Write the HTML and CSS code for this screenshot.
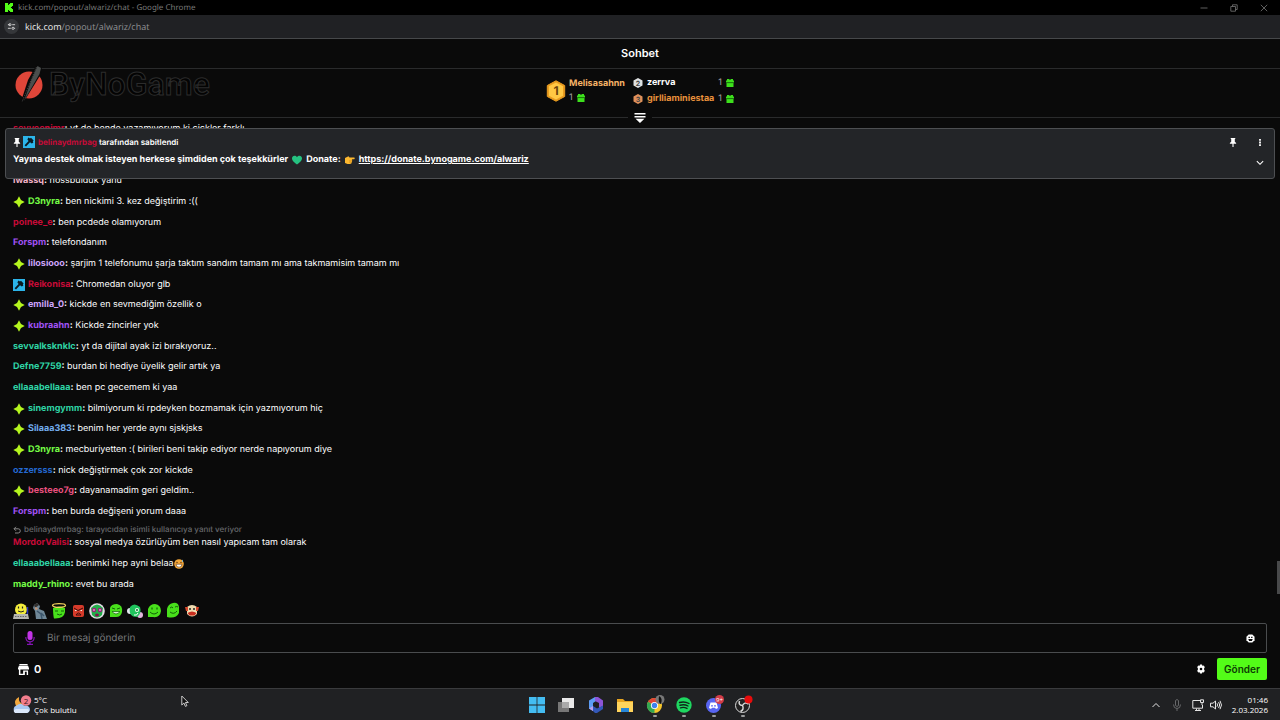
FILE: index.html
```html
<!DOCTYPE html>
<html lang="tr">

<head>
    <meta charset="UTF-8">
    <meta name="viewport" content="width=device-width, initial-scale=1.0">
    <title>kick.com/popout/alwariz/chat</title>
    <link rel="stylesheet" href="styles.css">
</head>

<body>
    <!-- shared icons -->
    <svg class="defs" aria-hidden="true">
        <symbol id="star" viewBox="0 0 12 12">
            <path d="M6 .3 8 4 11.700 6 8 8 6 11.700 4 8 .3 6 4 4z" fill="#b4f51e" />
        </symbol>
        <symbol id="mod" viewBox="0 0 12 12">
            <path d="M0 0h12v12H0z" fill="#2cb5ea" />
            <path d="M5.4 1.6 7 2.4 8 1.8 10.6 4.6 9.8 5.4 10.4 6.4 8.8 7.6 7 6.2 3 10.6 1.6 9.2 5.6 5 4.4 3.4z" fill="#0a1a22" />
        </symbol>
        <symbol id="gift" viewBox="0 0 8 8">
            <path d="M1 0h2l1 1 1-1h2v1.500h1v2H0v-2h1zM.5 4h7v4h-7z" fill="#3de01c" />
            <path d="M.5 3.700h7" stroke="#158a0a" stroke-width=".6" />
        </symbol>
        <symbol id="pin" viewBox="0 0 8 10">
            <path d="M1.500 0h5v1.200H6v3l1.500 1.300v1H4.600V10H3.400V6.500H.5v-1L2 4.200v-3h-.5z" fill="#fff" />
        </symbol>
    </svg>

    <div class="title-bar">
        <svg class="kick-logo" viewBox="0 0 9 10">
            <path d="M0 0h3.500v2.300h1V1.200h1.200V0H9v3.400H7.800v1.100H6.700v1h1.100v1.100H9V10H5.700V8.800H4.500V7.700h-1V10H0z" fill="#53fc18" />
        </svg>
        <span class="window-title">kick.com/popout/alwariz/chat - Google Chrome</span>
        <div class="window-controls">
            <button aria-label="Simge durumuna küçült"><svg viewBox="0 0 8 8"><path d="M.5 4h7" /></svg></button>
            <button aria-label="Önceki boyut"><svg viewBox="0 0 8 8"><path d="M.8 2.500h4.700v4.700H.8zM2.500 2.300V.8h4.700v4.700H5.700" /></svg></button>
            <button aria-label="Kapat"><svg viewBox="0 0 8 8"><path d="M.8.800l6.400 6.400M7.200.800.800 7.200" /></svg></button>
        </div>
    </div>

    <div class="address-bar">
        <button class="site-info" aria-label="Site bilgileri">
            <svg viewBox="0 0 10 10">
                <path d="M1 3h2M5.800 3H9M1 7h3.200M8 7h1" />
                <circle cx="3.300" cy="3" r="1.200" />
                <circle cx="6.700" cy="7" r="1.200" />
            </svg>
        </button>
        <span class="url"><b>kick.com</b>/popout/alwariz/chat</span>
    </div>

    <header class="chat-header">
        <h1>Sohbet</h1>
    </header>

    <section class="leaderboard">
        <div class="sponsor">
            <svg viewBox="0 0 30 42">
                <circle cx="14" cy="22" r="13.500" fill="#df4639" />
                <path d="M22 1 27 3.500 26 11 8 40 5.500 40 13 17z" fill="#0a0a0a" />
                <path d="M22.500 3 26 5 24.500 11 9 38 16 18z" fill="#4b4e4d" />
                <path d="M21.500 4 7 39" stroke="#555" stroke-width=".7" stroke-dasharray="1.500 1" />
            </svg>
            <span>ByNoGame</span>
        </div>
        <div class="ranks">
            <div class="first">
                <svg class="medal-big" viewBox="0 0 20 22">
                    <path d="M10 .8 18.700 5.500v11L10 21.200 1.300 16.500v-11z" fill="#e99c20" stroke="#e99c20" stroke-linejoin="round" />
                    <path d="M10 2.500 17 6.300v9.400L10 19.500 3 15.700V6.300z" fill="#ffc844" />
                    <text x="10" y="15" text-anchor="middle">1</text>
                </svg>
                <div>
                    <div class="gold">Melisasahnn</div>
                    <div class="gifts">1 <svg><use href="#gift" /></svg></div>
                </div>
            </div>
            <div class="others">
                <div class="rank">
                    <svg class="medal" viewBox="0 0 10 10">
                        <path d="M5 0 9.500 2.500v5L5 10 .5 7.500v-5z" fill="#dfe1e3" />
                        <text x="5" y="7.500" text-anchor="middle">2</text>
                    </svg>
                    <span class="name">zerrva</span>
                    <span class="gifts">1 <svg><use href="#gift" /></svg></span>
                </div>
                <div class="rank">
                    <svg class="medal" viewBox="0 0 10 10">
                        <path d="M5 0 9.500 2.500v5L5 10 .5 7.500v-5z" fill="#e0905a" />
                        <text x="5" y="7.500" text-anchor="middle">3</text>
                    </svg>
                    <span class="name bronze">girlliaminiestaa</span>
                    <span class="gifts">1 <svg><use href="#gift" /></svg></span>
                </div>
            </div>
        </div>
        <button class="collapse" aria-label="Sıralamayı daralt">
            <svg viewBox="0 0 12 10"><path d="M.5 0h11v1.600H.5zM.5 3h11v1.600H.5zM1.600 5.800h8.800L6 10z" fill="#fff" /></svg>
        </button>
    </section>

    <main class="chat">
        <div class="pinned">
            <div class="pinned-text">
                <p class="pinned-by">
                    <svg class="pin"><use href="#pin" /></svg>
                    <svg class="badge"><use href="#mod" /></svg>
                    <span><b class="red">belinaydmrbag</b> tarafından sabitlendi</span>
                </p>
                <p class="pinned-message">Yayına destek olmak isteyen herkese şimdiden çok teşekkürler
                    <svg viewBox="0 0 10 10"><path d="M5 9.500C1 6.500 0 5 0 3.200 0 .5 3.600-.2 5 2.200 6.400-.2 10 .5 10 3.200 10 5 9 6.500 5 9.500z" fill="#25c281" /></svg>
                    Donate:
                    <svg viewBox="0 0 10 10"><path d="M0 3 3.500 1.200 4.500 2.500H9.300q1 .8 0 1.700H6.800Q7.800 5 7 5.800 7.400 6.600 6.700 7.200 6.900 8.800 5 9H2.500L0 8z" fill="#fcb830" /><path d="M4 5.800h3M4 7.200h2.700" stroke="#c67f12" stroke-width=".5" /></svg>
                    <a href="https://donate.bynogame.com/alwariz">https://donate.bynogame.com/alwariz</a>
                </p>
            </div>
            <div class="pinned-actions">
                <button aria-label="Sabitlemeyi kaldır"><svg class="pin"><use href="#pin" /></svg></button>
                <button aria-label="Menü"><svg class="pin" viewBox="0 0 8 10"><path d="M3 1h2v2H3zM3 4h2v2H3zM3 7h2v2H3z" fill="#fff" /></svg></button>
                <button class="expand" aria-label="Genişlet"><svg class="pin" viewBox="0 0 8 10"><path d="M.5 3.500 4 7 7.500 3.500" fill="none" stroke="#fff" stroke-width="1.200" /></svg></button>
            </div>
        </div>

        <ul class="messages">
            <li><p><b class="red">sevvcenimr</b><b>:</b> yt de bende yazamıyorum ki ciçkler farklı</p></li>
            <li class="covered"></li>
            <li><p><b class="pink">iwassq</b><b>:</b> hossbulduk yahu</p></li>
            <li><svg class="badge"><use href="#star" /></svg><p><b class="green">D3nyra</b><b>:</b> ben nickimi 3. kez değiştirim :((</p></li>
            <li><p><b class="red">poinee_e</b><b>:</b> ben pcdede olamıyorum</p></li>
            <li><p><b class="purple">Forspm</b><b>:</b> telefondanım</p></li>
            <li><svg class="badge"><use href="#star" /></svg><p><b class="lilac">lilosiooo</b><b>:</b> şarjim 1 telefonumu şarja taktım sandım tamam mı ama takmamisim tamam mı</p></li>
            <li><svg class="badge"><use href="#mod" /></svg><p><b class="red">Reikonisa</b><b>:</b> Chromedan oluyor glb</p></li>
            <li><svg class="badge"><use href="#star" /></svg><p><b class="lilac">emilla_0</b><b>:</b> kickde en sevmediğim özellik o</p></li>
            <li><svg class="badge"><use href="#star" /></svg><p><b class="purple">kubraahn</b><b>:</b> Kickde zincirler yok</p></li>
            <li><p><b class="teal">sevvalksknklc</b><b>:</b> yt da dijital ayak izi bırakıyoruz..</p></li>
            <li><p><b class="teal">Defne7759</b><b>:</b> burdan bi hediye üyelik gelir artık ya</p></li>
            <li><p><b class="teal">ellaaabellaaa</b><b>:</b> ben pc gecemem ki yaa</p></li>
            <li><svg class="badge"><use href="#star" /></svg><p><b class="teal">sinemgymm</b><b>:</b> bilmiyorum ki rpdeyken bozmamak için yazmıyorum hiç</p></li>
            <li><svg class="badge"><use href="#star" /></svg><p><b class="sky">Silaaa383</b><b>:</b> benim her yerde aynı sjskjsks</p></li>
            <li><svg class="badge"><use href="#star" /></svg><p><b class="green">D3nyra</b><b>:</b> mecburiyetten :( birileri beni takip ediyor nerde napıyorum diye</p></li>
            <li><p><b class="blue">ozzersss</b><b>:</b> nick değiştirmek çok zor kickde</p></li>
            <li><svg class="badge"><use href="#star" /></svg><p><b class="rose">besteeo7g</b><b>:</b> dayanamadim geri geldim..</p></li>
            <li><p><b class="purple">Forspm</b><b>:</b> ben burda değişeni yorum daaa</p></li>
            <li class="reply">
                <div class="reply-to">
                    <svg viewBox="0 0 8 8"><path d="M3 .8 1 2.800l2 2M1 2.800h4.200a1.800 1.800 0 0 1 0 4.200H2" /></svg>
                    <span>belinaydmrbag: tarayıcıdan isimli kullanıcıya yanıt veriyor</span>
                </div>
                <p><b class="red">MordorValisi</b><b>:</b> sosyal medya özürlüyüm ben nasıl yapıcam tam olarak</p>
            </li>
            <li>
                <p><b class="teal">ellaaabellaaa</b><b>:</b> benimki hep ayni belaa</p>
                <svg class="emoji" viewBox="0 0 10 10">
                    <circle cx="5" cy="5" r="4.800" fill="#f5a93a" />
                    <path d="M2 5.200h6a3 3 0 0 1-6 0z" fill="#fff" stroke="#5d3412" stroke-width=".6" />
                    <path d="M1.800 3.800 3 3l1 .8M6 3.800 7 3l1.200.8" fill="none" stroke="#5d3412" stroke-width=".7" />
                    <path d="M8.200.5q1.600 2 .4 2.400T8.200.5z" fill="#6fc4ef" />
                </svg>
            </li>
            <li><p><b class="green">maddy_rhino</b><b>:</b> evet bu arada</p></li>
        </ul>
        <div class="scroll-thumb"></div>
    </main>

    <footer class="composer">
        <div class="emotes">
            <button aria-label="Klavye"><svg viewBox="0 0 16 16"><circle cx="8" cy="6.500" r="6" fill="#f3ec3c" /><path d="M5.500 3.500v2M9.500 3.500v2" stroke="#222" stroke-width="1.200" /><path d="M5 8q3 2 6 0" fill="none" stroke="#222" /><path d="M14.500 4v7" stroke="#2632b8" stroke-width="1.500" /><path d="M1 11h14l1 5H0z" fill="#b5b5b0" /><path d="M2 13.500h12" stroke="#666" stroke-dasharray="1.500 1" /></svg></button>
            <button aria-label="Üzgün"><svg viewBox="0 0 16 16"><path d="M2 2 5 0l3 3-1 3 5 2 3 8H4L3 8 1 5z" fill="#6f8797" /><path d="M2 2 5 0l2 2-4 3z" fill="#33302e" /><path d="M3 4l3 1-1 2-2-.5z" fill="#bd9378" /><path d="M5 8l4 3 1 5M9 10l3 3" fill="none" stroke="#3c566c" stroke-width="1.500" /></svg></button>
            <button aria-label="Melek"><svg viewBox="0 0 16 16"><path d="M2 5q6-3 12 0v4q-1 7-11 6.500Q2 12 2 5z" fill="#48e01b" /><ellipse cx="8" cy="2.500" rx="6.500" ry="1.800" fill="none" stroke="#f2d15c" stroke-width="1.300" /><path d="M4 8h3M10 8h3M6 11q3 2 5 0" fill="none" stroke="#116009" /></svg></button>
            <button aria-label="Kızgın"><svg viewBox="0 0 16 16"><rect x="3" y="2" width="11" height="12" rx="2" fill="#d63b2b" /><path d="M4 5l4 2.500L13 5M6 12q2.500-4 5 0z" fill="none" stroke="#3a0b08" /><path d="M5 7.500h1.500M10.500 7.500h1.500" stroke="#f4e8dc" /></svg></button>
            <button aria-label="Kulaklık"><svg viewBox="0 0 16 16"><circle cx="8" cy="8" r="7.800" fill="#e5dce6" /><path d="M2 5q6-7 12 0l-1 7q-5 5-10 0z" fill="#22ad49" /><circle cx="5" cy="7" r="2.200" fill="#9a1e78" /><circle cx="11" cy="7" r="2.200" fill="#9a1e78" /><circle cx="5" cy="7" r=".8" fill="#fff" /><circle cx="11" cy="7" r=".8" fill="#fff" /><ellipse cx="8" cy="12" rx="2" ry="1.500" fill="#7c144d" /></svg></button>
            <button aria-label="Gülen"><svg viewBox="0 0 16 16"><path d="M2 5q1-4 7-4 6 1 5 8-1 5-6 5H2z" fill="#48e01b" /><path d="M4 5l3 1M9 6l3-1" stroke="#116009" /><path d="M4 8.500h8q-2 2.500-4 2.500T4 8.500z" fill="#d7f7ce" stroke="#116009" stroke-width=".7" /></svg></button>
            <button aria-label="Dans"><svg viewBox="0 0 16 16"><circle cx="3" cy="8" r="3" fill="#e5e5ee" /><circle cx="13" cy="12" r="3" fill="#e4b5df" /><path d="M3 4q4-5 10 0 2 6-3 10-9 0-7-10z" fill="#20c45d" /><circle cx="10" cy="7" r="2" fill="#eafbed" /><circle cx="10" cy="7" r="1" fill="#126d35" /><path d="M7 12q3 1 4-2" fill="none" stroke="#fff" /></svg></button>
            <button aria-label="Mutlu"><svg viewBox="0 0 16 16"><path d="M2 6q2-5 7-5 6 1 6 7-1 7-8 6H2z" fill="#48e01b" /><path d="M6 4.500v2M11 4.500v2" stroke="#116009" stroke-width="1.200" /><path d="M4 9q4 4 8 0" fill="none" stroke="#116009" /></svg></button>
            <button aria-label="Düşünceli"><svg viewBox="0 0 16 16"><path d="M2 6q1-5 6-6 5-1 6 4v6q-3 6-12 4z" fill="#48e01b" /><path d="M5 5q2-2 3 0M10 4q2-1 3 0M5 9q4 3 7-1" fill="none" stroke="#116009" /></svg></button>
            <button aria-label="Palyaço"><svg viewBox="0 0 16 16"><path d="M3 4q5-4 10 0v7q-5 5-10 0z" fill="#f0dcb0" /><path d="M1 4h3v4H2zM15 4h-3v4h2z" fill="#d8462b" /><path d="M3.500 10q4.500-3 9 0l-2 2.500h-5z" fill="#c82c1e" /><path d="M5 6h2M9 6h2" stroke="#222" stroke-width="1.500" /></svg></button>
        </div>
        <div class="message-box">
            <button class="mic" aria-label="Sesli mesaj"><svg viewBox="0 0 10 14"><rect x="2.500" width="5" height="9" rx="2.500" fill="#c334e8" /><path d="M.8 6q0 4.800 4.200 4.800T9.200 6M5 11v2.500M2 13.400h6" fill="none" stroke="#8414b4" stroke-width="1.200" /></svg></button>
            <input type="text" placeholder="Bir mesaj gönderin" aria-label="Bir mesaj gönderin">
            <button class="smile" aria-label="İfadeler"><svg viewBox="0 0 10 10"><path d="M3 .5h4L9.500 3v4L7 9.500H3L.5 7V3z" fill="#fff" /><path d="M2.800 3h1.500v1.500H2.800zM5.700 3h1.500v1.500H5.700zM2.500 5.600h5L6.500 7.800h-3z" fill="#0a0a0a" /></svg></button>
        </div>
        <div class="composer-actions">
            <button class="points"><svg viewBox="0 0 12 12"><path d="M1.500 0h9v1.300h-9zM1 2h10l1 2.500v1.500H0V4.500zM1 6h1.600v4.500h3V7H11v5H9.500V8.400H7.500V12H1z" fill="#fff" /></svg>0</button>
            <button class="settings" aria-label="Ayarlar"><svg viewBox="0 0 10 10"><path d="M4 .5h2l.3 1.300 1.300-.4 1.200 1.700-.9 1.900.9 1.900-1.200 1.700-1.300-.4L6 9.500H4l-.3-1.300-1.300.4-1.200-1.700.9-1.900-.9-1.900 1.200-1.700 1.300.4z" fill="#fff" /><circle cx="5" cy="5" r="1.300" fill="#0a0a0a" /></svg></button>
            <button class="send">Gönder</button>
        </div>
    </footer>

    <div class="taskbar">
        <button class="weather">
            <svg viewBox="0 0 20 20">
                <path d="M7 2q-1 6 5 7-3 5-8 2-3-6 3-9z" fill="#f4a83c" />
                <path d="M4 18a4 4 0 0 1 .5-7.500Q9 7 12 10.500 18 10 18 15q-1 3-3 3z" fill="#a9c8f2" />
                <path d="M3 18q-3-3 1-4h12q3 2-1 4z" fill="#dbe8fa" />
                <circle cx="14" cy="5.500" r="5.200" fill="#f27e8d" />
                <text x="14" y="8.500" text-anchor="middle">2</text>
            </svg>
            <span>5°C<br>Çok bulutlu</span>
        </button>
        <div class="apps">
            <button aria-label="Başlat"><svg viewBox="0 0 16 16"><path d="M0 0h7.600v7.600H0zM8.400 0H16v7.600H8.400zM0 8.400h7.600V16H0zM8.400 8.400H16V16H8.400z" fill="#44bdf2" /></svg></button>
            <button aria-label="Görev görünümü"><svg viewBox="0 0 16 16"><path d="M4 1h12v10H4z" fill="#e9e9e9" /><path d="M0 5h11v10H0z" fill="#777" /><path d="M4 5h7v6H4z" fill="#aaa" /></svg></button>
            <button aria-label="Microsoft 365"><svg viewBox="0 0 16 16"><path d="M7 0 1 3.500v8L5 14V6l6-4z" fill="#5c9cf5" /><path d="M7 0h3l5 3.500V9l-4 2V6L7 4z" fill="#8d55d8" /><path d="M5 14V9l4 2.500 6-3V12l-6 4H7z" fill="#3358b8" /><path d="M1 11.500 5 9v5z" fill="#b9a1f0" /></svg></button>
            <button aria-label="Dosya Gezgini"><svg viewBox="0 0 16 16"><path d="M0 2h6l2 2h8v11H0z" fill="#e8a521" /><path d="M0 5h16v10H0z" fill="#ffd45c" /><path d="M4 11h8v4H4z" fill="#2686d8" /></svg></button>
            <button class="running" aria-label="Google Chrome"><svg viewBox="0 0 16 16"><circle cx="7.500" cy="8.500" r="7.500" fill="#f6c62c" /><path d="M7.500 8.500 1 4.700A7.500 7.500 0 0 1 14 4.700z" fill="#e24535" /><path d="M1 4.700 7.500 8.500 7.500 16A7.500 7.500 0 0 1 1 4.700z" fill="#34a853" /><circle cx="7.500" cy="8.500" r="3.600" fill="#fff" /><circle cx="7.500" cy="8.500" r="2.700" fill="#3f82ef" /><circle cx="13" cy="2.500" r="4.500" fill="#777" /><path d="M12-1q4 2 2 8-3-1-2-8z" fill="#111" /></svg></button>
            <button class="running" aria-label="Spotify"><svg viewBox="0 0 16 16"><circle cx="8" cy="8" r="7.700" fill="#1ed760" /><path d="M3.500 5.500q5-1.500 9.500 1M4 8.200q4.500-1.200 8 .8M4.500 10.800q3.500-1 6.500.6" fill="none" stroke="#10251a" stroke-width="1.400" stroke-linecap="round" /></svg></button>
            <button class="running" aria-label="Discord"><svg viewBox="0 0 16 16"><circle cx="7.500" cy="8.500" r="7.500" fill="#5865f2" /><path d="M4.500 5.500h6l1.500 5.500-2 1-1-1.200H6L5 12l-2-1z" fill="#fff" /><circle cx="6" cy="8.800" r=".9" fill="#5865f2" /><circle cx="9" cy="8.800" r=".9" fill="#5865f2" /><circle cx="13.500" cy="2.500" r="4.500" fill="#d33c48" /><text x="13.500" y="4.500" text-anchor="middle">9+</text></svg></button>
            <button class="running" aria-label="OBS Studio"><svg viewBox="0 0 16 16"><circle cx="7.500" cy="8.500" r="7" fill="#222" stroke="#d7d7d7" /><path d="M7.500 8.500Q3 8 4.500 4M7.500 8.500q2-4 6-1.500M7.500 8.500q2 4-2 6" fill="none" stroke="#d7d7d7" stroke-width="1.500" /><circle cx="13.500" cy="2.500" r="4" fill="#e80c0c" /></svg></button>
        </div>
        <div class="tray">
            <button aria-label="Gizli simgeler"><svg viewBox="0 0 12 12"><path d="M2.500 8 6 4.500 9.500 8" /></svg></button>
            <button class="muted" aria-label="Mikrofon"><svg viewBox="0 0 12 12"><path d="M4.500 1.500q1.500-2 3 0v5q-1.500 2-3 0zM2.500 5.500q0 4 3.500 4t3.500-4M6 9.500V12" /></svg></button>
            <button aria-label="Ağ"><svg viewBox="0 0 12 12"><path d="M8 1.500H.8v7.700h9.700V6M3 11.500h6M4.500 9.500v2M7 9.500v2M8.500.800h3v2.700h-3zM10 3.500V6" /></svg></button>
            <button aria-label="Ses"><svg viewBox="0 0 12 12"><path d="M.5 4.200H3L5.500 2v8L3 7.800H.5zM7 4.300q1.200 1.700 0 3.400M8.600 3q2.200 3 0 6M10 1.800q3 4.200 0 8.400" /></svg></button>
            <button class="clock">01:46<br>2.03.2026</button>
        </div>
        <svg class="cursor" viewBox="0 0 8 12"><path d="M.8 1v9l2.100-2 1.500 3.400 1.500-.7-1.500-3.200h2.900z" fill="#111" stroke="#ddd" stroke-width=".9" /></svg>
    </div>
</body>

</html>
```
FILE: styles.css
```css
* {
    margin: 0;
    padding: 0;
    box-sizing: border-box;
}

body {
    display: flex;
    flex-direction: column;
    height: 100vh;
    overflow: hidden;
    background: #0a0a0a;
    color: #fff;
    font-family: Inter, "Liberation Sans", sans-serif;
    font-size: 9px;
    line-height: 16px;
    text-rendering: geometricPrecision;
}

button {
    display: flex;
    align-items: center;
    justify-content: center;
    border: none;
    background: none;
    color: inherit;
    font: inherit;
    cursor: pointer;
}

svg {
    display: block;
    flex: none;
    overflow: visible;
}

ul {
    list-style: none;
}

.defs {
    display: none;
}

/* browser window */
.title-bar {
    display: flex;
    align-items: center;
    height: 15px;
    flex: none;
    padding: 0 12px 0 5px;
    background: #000;
    color: #777;
    font-family: "Noto Sans", "Open Sans", sans-serif;
    font-size: 8px;
}

.kick-logo {
    width: 8px;
    height: 9px;
    margin-right: 5px;
}

.window-controls {
    display: flex;
    gap: 22px;
    margin-left: auto;
}

.window-controls svg {
    width: 8px;
    height: 8px;
    fill: none;
    stroke: #777;
    stroke-width: .8;
}

.address-bar {
    display: flex;
    align-items: center;
    gap: 6px;
    height: 24px;
    flex: none;
    padding: 0 4px;
    background: #202124;
    border-bottom: 1px solid #46484a;
    color: #8e9092;
    font-family: "Open Sans", "Noto Sans", sans-serif;
}

.site-info {
    width: 15px;
    height: 15px;
    border-radius: 50%;
    background: #35373a;
}

.site-info svg {
    width: 9px;
    height: 9px;
    fill: none;
    stroke: #ddd;
}

.url b {
    color: #eee;
    font-weight: 400;
}

/* chat header */
.chat-header {
    flex: none;
    height: 30px;
    border-bottom: 1px solid #2a2b2c;
    text-align: center;
}

.chat-header h1 {
    font-size: 11px;
    font-weight: 600;
    line-height: 29px;
}

.leaderboard {
    position: relative;
    display: flex;
    justify-content: center;
    align-items: flex-start;
    flex: none;
    height: 49px;
    padding-top: 6px;
    border-bottom: 1px solid #2a2b2c;
}

.sponsor {
    position: absolute;
    left: 15px;
    top: -7px;
    display: flex;
    align-items: center;
    gap: 4px;
    color: #030303;
    font-family: Roboto, sans-serif;
    font-size: 32px;
    font-weight: 500;
    line-height: 44px;
    -webkit-text-stroke: 1px #2c2c2c;
}

.sponsor svg {
    width: 30px;
    height: 42px;
}

.ranks {
    display: flex;
    align-items: center;
    gap: 8px;
    font-size: 9px;
    font-weight: 700;
}

.first {
    display: flex;
    align-items: center;
    gap: 3px;
    line-height: 14px;
}

.medal-big {
    width: 20px;
    height: 22px;
}

.medal-big text {
    font-size: 12px;
    font-weight: 700;
    fill: #68400b;
}

.medal {
    width: 10px;
    height: 10px;
}

.medal text {
    font-size: 7px;
    font-weight: 700;
    fill: #444;
}

.rank {
    display: flex;
    align-items: center;
    gap: 4px;
}

.rank .name {
    margin-right: auto;
}

.gold {
    color: #f5b267;
}

.rank .bronze {
    color: #e9913c;
}

.gifts {
    display: flex;
    align-items: center;
    gap: 4px;
    color: #a5a7a9;
    font-weight: 400;
}

.gifts svg {
    width: 8px;
    height: 8px;
}

.collapse {
    position: absolute;
    left: 50%;
    bottom: -7px;
    width: 24px;
    height: 12px;
    margin-left: -12px;
    background: #0a0a0a;
}

.collapse svg {
    width: 12px;
    height: 10px;
}

/* messages */
.chat {
    position: relative;
    display: flex;
    flex: 1;
    min-height: 0;
    padding: 3px 13px 5px;
}

.messages {
    display: flex;
    flex-direction: column;
    justify-content: space-between;
    flex: 1;
}

.messages li {
    display: flex;
    align-items: center;
    flex: none;
    height: 16px;
}

.messages .reply,
.messages .covered {
    display: block;
    height: 27px;
}

.reply-to {
    display: flex;
    align-items: center;
    gap: 3px;
    color: #66686a;
    font-size: 8px;
    font-weight: 500;
    line-height: 11px;
}

.reply-to svg {
    width: 8px;
    height: 8px;
    fill: none;
    stroke: #888;
}

.badge {
    width: 12px;
    height: 12px;
    margin-right: 3px;
}

.emoji {
    width: 10px;
    height: 10px;
}

b {
    font-weight: 700;
}

.red { color: #c70b38; }
.pink { color: #f4b4c9; }
.green { color: #75fd46; }
.purple { color: #a152f5; }
.lilac { color: #cda4fb; }
.teal { color: #2fd5a6; }
.sky { color: #72aced; }
.blue { color: #2469d2; }
.rose { color: #e9507f; }

.pinned {
    position: absolute;
    z-index: 1;
    top: 10px;
    left: 5px;
    right: 5px;
    display: flex;
    justify-content: space-between;
    height: 51px;
    padding: 5px 6px 5px 7px;
    background: #232528;
    border: 1px solid #4d4f52;
    border-radius: 3px;
    font-weight: 600;
}

.pinned-by {
    display: flex;
    align-items: center;
    font-size: 8px;
}

.pinned-by .pin {
    margin-right: 2px;
}

.pin {
    width: 8px;
    height: 9px;
}

.pinned-message {
    display: flex;
    align-items: center;
    gap: 4px;
    font-size: 9px;
    font-weight: 700;
    line-height: 20px;
}

.pinned-message svg {
    width: 10px;
    height: 10px;
}

.pinned-message a {
    color: inherit;
}

.pinned-actions {
    display: grid;
    grid-template-columns: 16px 16px;
    grid-template-rows: 16px 24px;
    column-gap: 11px;
}

.expand {
    grid-column: 2;
}

.scroll-thumb {
    position: absolute;
    right: 0;
    bottom: 4px;
    width: 3px;
    height: 33px;
    background: #48494a;
}

/* message box */
.composer {
    flex: none;
    padding: 5px 13px 8px;
}

.emotes {
    display: flex;
    gap: 3px;
    margin-bottom: 4px;
}

.emotes svg {
    width: 16px;
    height: 16px;
}

.message-box {
    display: flex;
    align-items: center;
    height: 30px;
    padding: 0 11px;
    border: 1px solid #4a4c4e;
    border-radius: 2px;
}

.mic svg {
    width: 10px;
    height: 14px;
}

.message-box input {
    flex: 1;
    margin-left: 12px;
    border: none;
    outline: none;
    background: none;
    color: #fff;
    font: inherit;
    font-size: 10px;
    text-rendering: inherit;
}

.message-box input::placeholder {
    color: #77797b;
}

.smile svg {
    width: 9px;
    height: 9px;
}

.composer-actions {
    display: flex;
    align-items: center;
    margin-top: 5px;
}

.points {
    gap: 5px;
    margin-left: 5px;
    font-size: 11px;
    font-weight: 600;
}

.points svg {
    width: 11px;
    height: 11px;
}

.settings {
    margin-left: auto;
    margin-right: 11px;
}

.settings svg {
    width: 10px;
    height: 10px;
}

.send {
    width: 50px;
    height: 22px;
    border-radius: 2px;
    background: #53fc18;
    color: #0d3a04;
    font-size: 10px;
    font-weight: 600;
}

/* taskbar */
.taskbar {
    position: relative;
    display: grid;
    grid-template-columns: 1fr 222px 1fr;
    align-items: center;
    flex: none;
    height: 32px;
    padding: 0 12px;
    background: #202123;
    border-top: 1px solid #3a3b3d;
    font-family: "Open Sans", "Noto Sans", sans-serif;
    font-size: 8px;
    line-height: 10px;
}

.weather {
    justify-self: start;
    gap: 2px;
    text-align: left;
}

.weather svg {
    width: 20px;
    height: 20px;
}

.weather text {
    font-size: 8px;
    fill: #401820;
}

.apps {
    display: flex;
    justify-content: space-between;
}

.apps button {
    position: relative;
}

.apps svg {
    width: 16px;
    height: 16px;
}

.apps text {
    font-size: 6px;
    fill: #fff;
}

.running::after {
    content: "";
    position: absolute;
    bottom: -4px;
    left: 6px;
    width: 4px;
    height: 2px;
    border-radius: 1px;
    background: #9a9b9c;
}

.tray {
    display: flex;
    align-items: center;
    justify-self: end;
    gap: 6px;
}

.tray svg {
    width: 12px;
    height: 12px;
    fill: none;
    stroke: #e4e4e4;
}

.tray button:first-child {
    margin-right: 3px;
}

.tray .muted {
    margin-right: 3px;
}

.tray .muted svg {
    stroke: #67686a;
}

.clock {
    margin-left: 4px;
    text-align: right;
}

.cursor {
    position: absolute;
    left: 181px;
    top: 6px;
    width: 8px;
    height: 12px;
}
```
